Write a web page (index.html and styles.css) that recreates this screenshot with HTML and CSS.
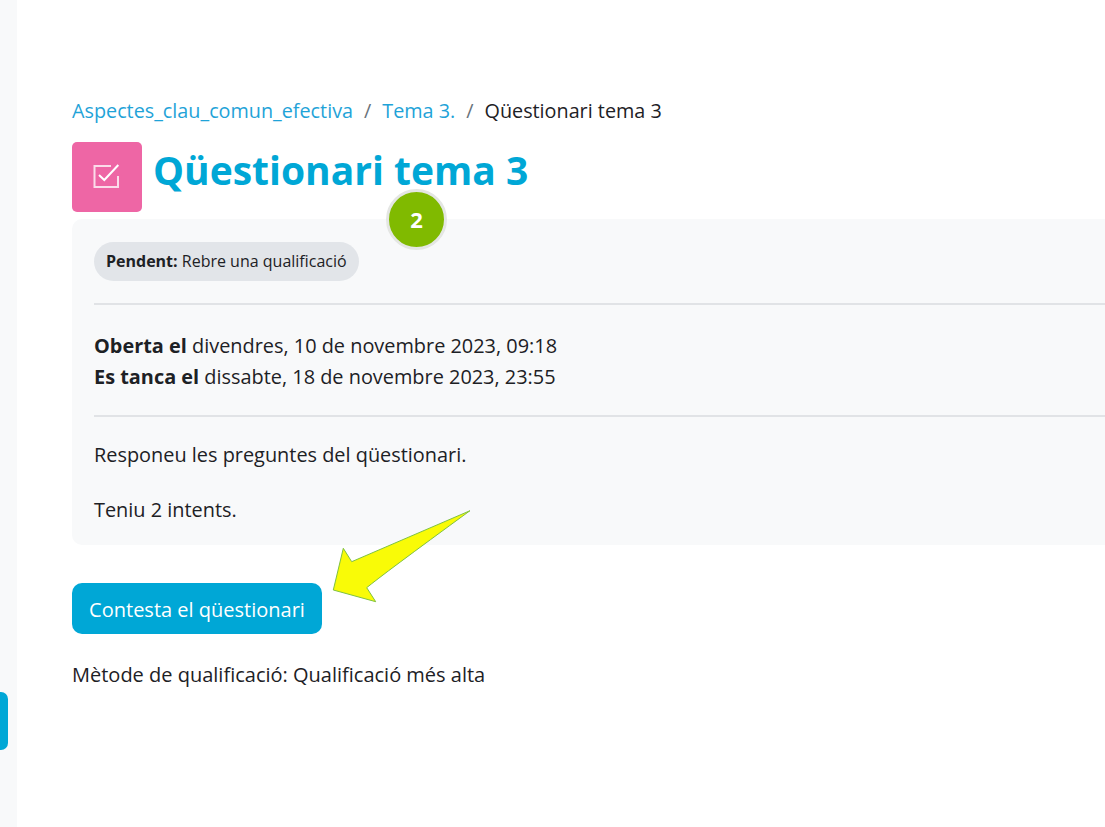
FILE: index.html
```html
<!DOCTYPE html>
<html lang="ca">
<head>
    <meta charset="UTF-8">
    <title>Qüestionari tema 3</title>
    <link rel="stylesheet" href="styles.css">
</head>
<body>
    <div class="page">
        <div class="side-strip">
            <div class="drawer-tab"></div>
        </div>

        <div class="content">
            <nav class="breadcrumb">
                <a href="#">Aspectes_clau_comun_efectiva</a>
                <span class="sep">/</span>
                <a href="#">Tema 3.</a>
                <span class="sep">/</span>
                <span>Qüestionari tema 3</span>
            </nav>

            <div class="heading">
                <div class="quiz-icon">
                    <svg width="28" height="28" viewBox="0 0 28 28" fill="none" stroke="#fbdcea" stroke-width="2">
                        <path d="M18 3H1.5V24H25V13"/>
                        <path d="M6 12L11.3 17L25.3 2" stroke="#fff"/>
                    </svg>
                </div>
                <h1>Qüestionari tema 3</h1>
            </div>

            <div class="card">
                <div class="pill"><b>Pendent:</b> Rebre una qualificació</div>
                <hr>
                <div class="dates">
                    <div><b>Oberta el</b> divendres, 10 de novembre 2023, 09:18</div>
                    <div><b>Es tanca el</b> dissabte, 18 de novembre 2023, 23:55</div>
                </div>
                <hr>
                <p>Responeu les preguntes del qüestionari.</p>
                <p>Teniu 2 intents.</p>
            </div>

            <button class="attempt">Contesta el qüestionari</button>
            <div class="grading">Mètode de qualificació: Qualificació més alta</div>
        </div>
    </div>

    <!-- annotations on top of the screenshot -->
    <div class="step-badge">2</div>
    <svg class="arrow" width="145" height="100" viewBox="0 0 145 100">
        <path d="M140 5.7L21.7 56.7L13.3 43.3L3.3 85L45.7 96.7L36.7 82.7Q52 70 140 5.7Z" fill="#f9fb07" stroke="#7fc241" stroke-width="1"/>
    </svg>
</body>
</html>
```

FILE: styles.css
```css
html, body {
    margin: 0;
    height: 100%;
    overflow: hidden;
}
body {
    position: relative;
    font-family: "Open Sans", "Noto Sans", sans-serif;
    font-size: 20px;
    color: #1d2125;
    background: #fff;
}
.page {
    display: flex;
    height: 100%;
}
.side-strip {
    position: relative;
    flex: 0 0 17px;
    background: #f8f9fa;
}
.drawer-tab {
    position: absolute;
    left: 0;
    top: 692px;
    width: 8px;
    height: 58px;
    background: #00a7d6;
    border-radius: 0 7px 7px 0;
}
.content {
    flex: 1;
    min-width: 0;
    padding: 98px 0 0 55px;
}
.breadcrumb {
    display: flex;
    gap: 11px;
    font-size: 19.8px;
    line-height: 26px;
    white-space: nowrap;
}
.breadcrumb a {
    color: #1fa3d8;
    text-decoration: none;
}
.sep {
    color: #6a737b;
}
.heading {
    display: flex;
    gap: 11px;
    margin-top: 18px;
}
.quiz-icon {
    display: flex;
    align-items: center;
    justify-content: center;
    width: 70px;
    height: 70px;
    background: #ee66a5;
    border-radius: 5px;
}
h1 {
    margin: 0;
    font-size: 39px;
    line-height: 56px;
    font-weight: 700;
    color: #00a7d6;
}
.card {
    margin-top: 7px;
    height: 326px;
    box-sizing: border-box;
    padding: 23px 0 0 22px;
    background: #f8f9fa;
    border-radius: 10px 0 0 10px;
}
.pill {
    display: inline-block;
    padding: 0 12px;
    line-height: 39px;
    font-size: 16px;
    background: #e2e5e9;
    border-radius: 20px;
}
hr {
    margin: 0;
    border: 0;
    border-top: 2px solid #e1e3e6;
}
.pill + hr {
    margin-top: 22px;
}
.dates {
    padding: 25px 0 23px;
    font-size: 19.9px;
    line-height: 31px;
}
p {
    margin: 0;
    font-size: 19.9px;
    line-height: 26px;
}
hr + p {
    margin-top: 25px;
}
p + p {
    margin-top: 29px;
}
.attempt {
    display: block;
    margin-top: 38px;
    width: 250px;
    height: 51px;
    padding: 2px 0 0;
    border: 0;
    border-radius: 10px;
    background: #00a7d6;
    color: #fff;
    font-family: inherit;
    font-size: 20px;
}
.grading {
    margin-top: 28px;
    line-height: 26px;
}
.step-badge {
    position: absolute;
    left: 386px;
    top: 189px;
    width: 61px;
    height: 61px;
    box-sizing: border-box;
    border: 3px solid #e4e6e3;
    border-radius: 50%;
    background: #80ba00;
    color: #fff;
    font-weight: 700;
    font-size: 22px;
    line-height: 55px;
    text-align: center;
}
.arrow {
    position: absolute;
    left: 330px;
    top: 505px;
}
```
